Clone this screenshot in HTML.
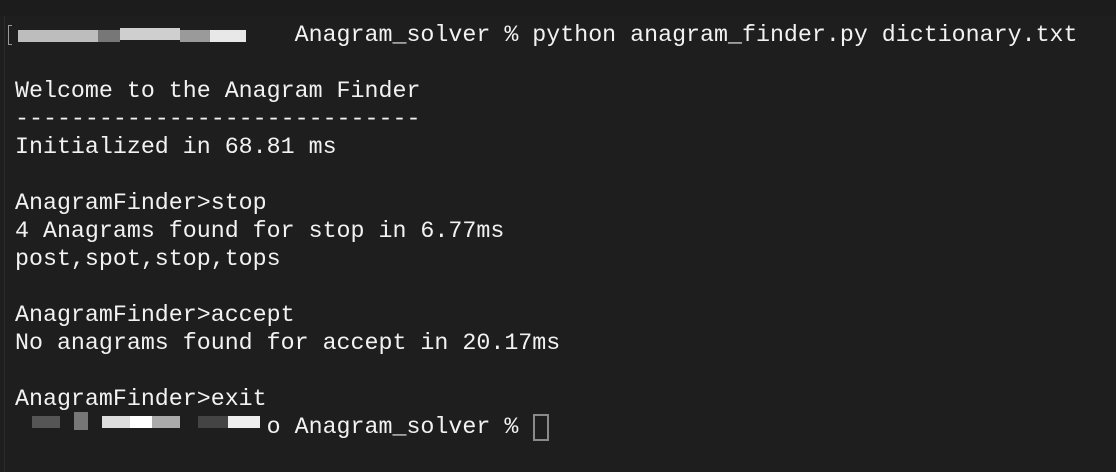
<!DOCTYPE html>
<html><head><meta charset="utf-8"><style>
html,body{margin:0;padding:0;width:1116px;height:472px;overflow:hidden;background:#1e1e1e;}
.top{position:absolute;left:0;top:0;width:1116px;height:16px;background:#1c1c1c;}
.edge{position:absolute;left:4px;top:16px;width:1px;height:456px;background:#2a2a2a;}
pre{position:absolute;left:15px;top:21px;margin:0;font-family:"Liberation Mono",monospace;font-size:23.3px;line-height:28px;color:#f2f2f2;white-space:pre;}
.b{position:absolute;height:12px;}
.cur{position:absolute;left:533px;top:414px;width:12px;height:23px;border:2px solid #8a8a8a;}
</style></head><body>
<div class="top"></div><div class="edge"></div>
<pre>                    Anagram_solver % python anagram_finder.py dictionary.txt

Welcome to the Anagram Finder
-----------------------------
Initialized in 68.81 ms

AnagramFinder&gt;stop
4 Anagrams found for stop in 6.77ms
post,spot,stop,tops

AnagramFinder&gt;accept
No anagrams found for accept in 20.17ms

AnagramFinder&gt;exit
                  o Anagram_solver % </pre>
<div style="position:absolute;left:8px;top:25px;width:3px;height:18px;border:1px solid #999;border-right:none;"></div>
<div class="b" style="left:18px;top:30px;width:80px;background:#bdbdbd"></div>
<div class="b" style="left:98px;top:30px;width:22px;background:#777"></div>
<div class="b" style="left:120px;top:28px;width:60px;background:#cfcfcf"></div>
<div class="b" style="left:180px;top:30px;width:30px;background:#9a9a9a"></div>
<div class="b" style="left:210px;top:30px;width:36px;background:#e8e8e8"></div>
<div class="b" style="left:32px;top:416px;width:28px;background:#555"></div>
<div class="b" style="left:74px;top:412px;width:14px;background:#777;height:18px"></div>
<div class="b" style="left:102px;top:416px;width:50px;background:#ddd"></div>
<div class="b" style="left:130px;top:416px;width:28px;background:#fff"></div>
<div class="b" style="left:152px;top:416px;width:28px;background:#aaa"></div>
<div class="b" style="left:198px;top:416px;width:30px;background:#444"></div>
<div class="b" style="left:228px;top:416px;width:32px;background:#eee"></div>
<div class="cur"></div>
</body></html>
